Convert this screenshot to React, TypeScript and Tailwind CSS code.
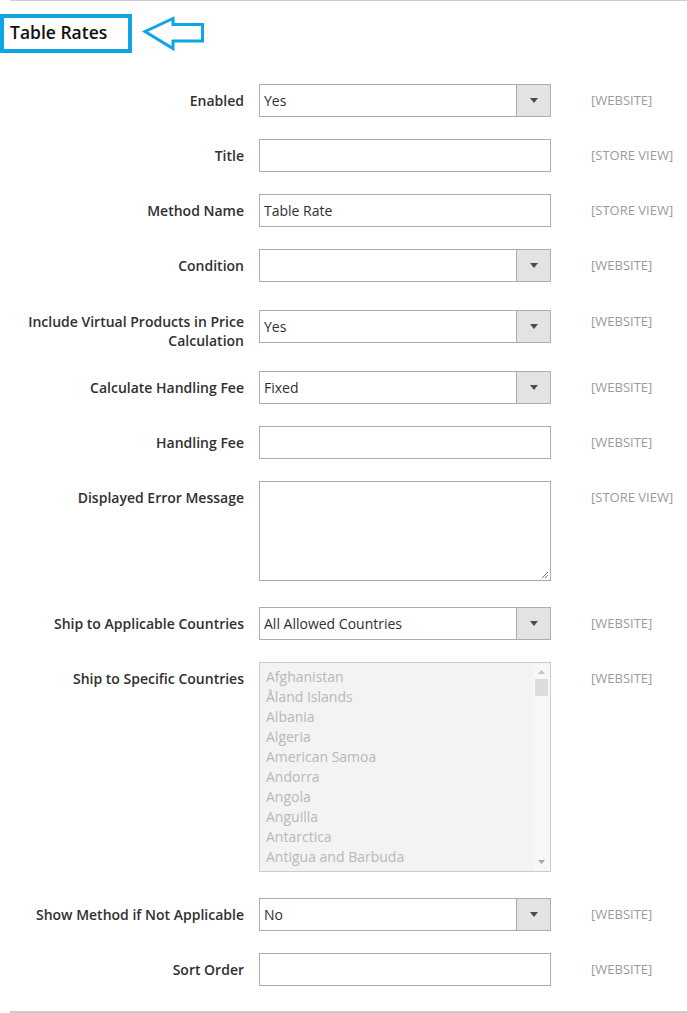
import type { ReactNode } from "react";

type Field = {
  label: ReactNode;
  scope: string;
  kind: "select" | "input" | "textarea" | "multi";
  value?: string;
  height: string;
  labelTop?: string;
};

const countries = [
  "Afghanistan",
  "Åland Islands",
  "Albania",
  "Algeria",
  "American Samoa",
  "Andorra",
  "Angola",
  "Anguilla",
  "Antarctica",
  "Antigua and Barbuda",
];

const fields: Field[] = [
  { label: "Enabled", scope: "[WEBSITE]", kind: "select", value: "Yes", height: "h-[55px]" },
  { label: "Title", scope: "[STORE VIEW]", kind: "input", height: "h-[55px]" },
  { label: "Method Name", scope: "[STORE VIEW]", kind: "input", value: "Table Rate", height: "h-[55px]" },
  { label: "Condition", scope: "[WEBSITE]", kind: "select", value: "", height: "h-[61px]" },
  {
    label: (
      <>
        Include Virtual Products in Price
        <br />
        Calculation
      </>
    ),
    scope: "[WEBSITE]",
    kind: "select",
    value: "Yes",
    height: "h-[61px]",
    labelTop: "pt-[2px]",
  },
  { label: "Calculate Handling Fee", scope: "[WEBSITE]", kind: "select", value: "Fixed", height: "h-[55px]" },
  { label: "Handling Fee", scope: "[WEBSITE]", kind: "input", height: "h-[55px]" },
  { label: "Displayed Error Message", scope: "[STORE VIEW]", kind: "textarea", height: "h-[126px]" },
  { label: "Ship to Applicable Countries", scope: "[WEBSITE]", kind: "select", value: "All Allowed Countries", height: "h-[55px]" },
  { label: "Ship to Specific Countries", scope: "[WEBSITE]", kind: "multi", height: "h-[236px]" },
  { label: "Show Method if Not Applicable", scope: "[WEBSITE]", kind: "select", value: "No", height: "h-[55px]" },
  { label: "Sort Order", scope: "[WEBSITE]", kind: "input", height: "h-[58px]" },
];

function SelectBox({ value }: { value: string }) {
  return (
    <div className="flex h-[33px] w-[292px] border border-[#adadad] bg-white">
      <span className="flex-1 pl-[4px] text-[14px] leading-[31px] text-[#303030]">{value}</span>
      <span className="flex w-[34px] items-center justify-center border-l border-[#adadad] bg-[#e3e3e3]">
        <svg width="8" height="5" viewBox="0 0 8 5">
          <path d="M0 0h8L4 5z" fill="#514943" />
        </svg>
      </span>
    </div>
  );
}

function InputBox({ value }: { value?: string }) {
  return (
    <div className="h-[33px] w-[292px] border border-[#adadad] bg-white pl-[4px] text-[14px] leading-[31px] text-[#303030]">
      {value}
    </div>
  );
}

function TextareaBox() {
  return (
    <div className="relative h-[100px] w-[292px] border border-[#adadad] bg-white">
      <svg className="absolute bottom-[1px] right-[1px]" width="8" height="8" viewBox="0 0 8 8">
        <path d="M7 1L1 7M7 4L4 7" stroke="#777" strokeWidth="1" />
      </svg>
    </div>
  );
}

function MultiBox() {
  return (
    <div className="flex h-[210px] w-[292px] border border-[#cccccc] bg-[#f3f3f3]">
      <div className="flex-1 pl-[6px] pt-[4px]">
        {countries.map((c) => (
          <div key={c} className="text-[14px] leading-[20px] text-[#b8b8b8]">
            {c}
          </div>
        ))}
      </div>
      <div className="flex w-[17px] flex-col items-center bg-[#f7f7f7]">
        <svg className="mt-[7px]" width="7" height="4" viewBox="0 0 7 4">
          <path d="M3.5 0L7 4H0z" fill="#c4c4c4" />
        </svg>
        <div className="mt-[5px] h-[17px] w-[13px] bg-[#dcdcdc]" />
        <div className="flex-1" />
        <svg className="mb-[7px]" width="7" height="4" viewBox="0 0 7 4">
          <path d="M0 0h7L3.5 4z" fill="#a8a8a8" />
        </svg>
      </div>
    </div>
  );
}

export default function App() {
  return (
    <div className="h-[1013px] w-[687px] bg-white font-['Open_Sans',sans-serif]">
      <div className="ml-[10px] h-[1px] bg-[#cccccc]" />

      <div className="mt-[13px] flex items-center">
        <div className="flex h-[39px] w-[132px] items-center border-[4px] border-[#0ea5e6] pl-[6px] pb-[2px] text-[17.5px] font-semibold text-[#111111]">
          Table Rates
        </div>
        <svg className="ml-[10px]" width="64" height="36" viewBox="0 0 64 36">
          <path
            d="M3 15.5L31 2.5V8.5H60.5V25H31V32.5Z"
            fill="none"
            stroke="#0ea5e6"
            strokeWidth="3"
            strokeLinejoin="miter"
          />
        </svg>
      </div>

      <div className="mt-[31px]">
        {fields.map((f, i) => (
          <div key={i} className={`flex items-start ${f.height}`}>
            <div
              className={`w-[244px] text-right text-[14px] font-semibold leading-[19px] text-[#303030] ${
                f.labelTop ?? "pt-[7px]"
              }`}
            >
              {f.label}
            </div>
            <div className="ml-[15px]">
              {f.kind === "select" && <SelectBox value={f.value ?? ""} />}
              {f.kind === "input" && <InputBox value={f.value} />}
              {f.kind === "textarea" && <TextareaBox />}
              {f.kind === "multi" && <MultiBox />}
            </div>
            <div
              className={`ml-[40px] text-[13px] leading-[19px] text-[#9b9b9b] ${
                f.labelTop ?? "pt-[7px]"
              }`}
            >
              {f.scope}
            </div>
          </div>
        ))}
      </div>

      <div className="ml-[10px] h-[2px] bg-[#cccccc]" />
    </div>
  );
}
